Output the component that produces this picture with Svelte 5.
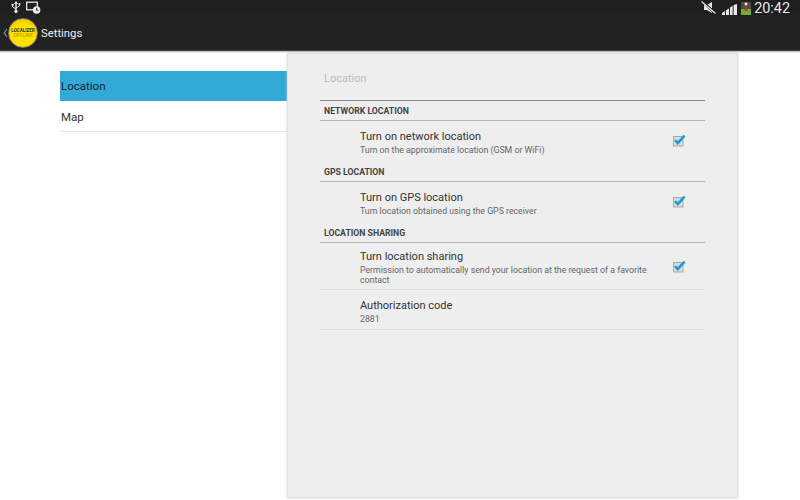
<script>
  const groups = [
    {
      title: "NETWORK LOCATION",
      items: [{ name: "Turn on network location", desc: "Turn on the approximate location (GSM or WiFi)", on: true }]
    },
    {
      title: "GPS LOCATION",
      items: [{ name: "Turn on GPS location", desc: "Turn location obtained using the GPS receiver", on: true }]
    },
    {
      title: "LOCATION SHARING",
      items: [
        { name: "Turn location sharing", desc: "Permission to automatically send your location at the request of a favorite contact", on: true },
        { name: "Authorization code", desc: "2881", on: false }
      ]
    }
  ];
</script>

<div class="screen">
  <div class="status">
    <svg class="usb" width="10" height="13" viewBox="0 0 10 13">
      <path d="M5 0 L7 3 H5.7 V9 A1.6 1.6 0 1 1 4.3 9 V3 H3 Z" fill="#e8e8e8" />
      <path d="M5 8 L1.6 6 V4 M5 7 L8.4 5 V3.6" fill="none" stroke="#e8e8e8" stroke-width="1" />
      <rect x="0.6" y="2.8" width="2" height="2" fill="#e8e8e8" />
      <circle cx="8.4" cy="3" r="1.1" fill="#e8e8e8" />
    </svg>
    <svg class="screenclock" width="15" height="13" viewBox="0 0 15 13">
      <rect x="0.7" y="1.2" width="10.6" height="7.6" fill="none" stroke="#e8e8e8" stroke-width="1.3" />
      <circle cx="10.6" cy="9" r="3.8" fill="#e8e8e8" />
      <path d="M10.6 6.8 V9.2 H12.4" fill="none" stroke="#222" stroke-width="0.9" />
    </svg>
    <span class="spacer"></span>
    <svg class="mute" width="15" height="13" viewBox="0 0 15 13">
      <path d="M3 4 H6 L11 1 V12 L6 9 H3 Z" fill="#e8e8e8" />
      <path d="M0.5 -0.5 L15 13" stroke="#1f1f1f" stroke-width="2.6" />
      <path d="M0.5 0.5 L14.5 12.5" stroke="#e8e8e8" stroke-width="1.2" />
    </svg>
    <svg class="signal" width="15" height="11" viewBox="0 0 15 11">
      <path d="M0 11 V9 L3 7 V11 Z M4 11 V6.2 L7 4.4 V11 Z M8 11 V3.6 L10.6 1.8 V11 Z M11.6 11 V1 L15 0 V11 Z" fill="#e8e8e8" />
    </svg>
    <svg class="app" width="10" height="13" viewBox="0 0 10 13">
      <rect x="0" y="0" width="10" height="7" fill="#4a4a4a" />
      <rect x="0" y="7" width="10" height="6" fill="#6fae2e" />
      <path d="M3 2 H7 L5.6 5.5 L7 9 H3.4 L4.6 5.5 Z" fill="#c9302c" />
      <circle cx="5" cy="2" r="1.4" fill="#e6e6e6" />
    </svg>
    <span class="clock">20:42</span>
  </div>

  <div class="actionbar">
    <svg class="caret" width="5" height="10" viewBox="0 0 5 10">
      <path d="M4 1 L1.2 5 L4 9" fill="none" stroke="#8a8a8a" stroke-width="1.2" />
    </svg>
    <div class="logo">
      <span class="l1">LOCALIZER</span>
      <span class="l2">OFFLINE</span>
    </div>
    <span class="title">Settings</span>
  </div>

  <div class="body">
    <nav class="side">
      <div class="hd active">Location</div>
      <div class="hd">Map</div>
    </nav>
    <main class="panel">
      <div class="crumb">Location</div>
      <div class="rule-top"></div>
      {#each groups as g}
        <div class="group">{g.title}</div>
        {#each g.items as it}
          <div class="pref">
            <div class="txt">
              <div class="name">{it.name}</div>
              <div class="desc">{it.desc}</div>
            </div>
            {#if it.on}
              <svg class="check" width="14" height="13" viewBox="0 0 14 13">
                <rect x="1.5" y="2.5" width="9.5" height="9.5" fill="#dcdcdc" stroke="#a8a8a8" stroke-width="1" />
                <path d="M3 6.2 L5.8 9 L12.6 1.6" fill="none" stroke="#1d9bd6" stroke-width="2.6" />
              </svg>
            {/if}
          </div>
        {/each}
      {/each}
    </main>
  </div>
</div>

<style>
  :global(body) {
    margin: 0;
    background: #fff;
  }
  .screen {
    width: 800px;
    height: 500px;
    display: flex;
    flex-direction: column;
    overflow: hidden;
    font-family: Roboto, "Liberation Sans", sans-serif;
  }
  .status {
    height: 15px;
    background: #1f1f1f;
    display: flex;
    align-items: center;
    padding-left: 11px;
    padding-right: 10px;
    color: #e8e8e8;
  }
  .screenclock {
    margin-left: 5px;
  }
  .spacer {
    flex: 1;
  }
  .signal {
    margin-left: 6px;
    margin-top: 3px;
  }
  .app {
    margin-left: 4px;
    margin-top: 1px;
  }
  .clock {
    font-size: 14.4px;
    margin-left: 3px;
    line-height: 17px;
    height: 15px;
  }
  .actionbar {
    height: 35px;
    background: #222;
    border-bottom: 1px solid #444;
    box-shadow: 0 1px 1px #bbb;
    display: flex;
    align-items: center;
    padding-left: 3px;
    flex: none;
    box-sizing: content-box;
  }
  .logo {
    width: 30px;
    height: 30px;
    box-sizing: border-box;
    border-radius: 50%;
    background: radial-gradient(circle at 50% 60%, #ffe000 50%, #eeb400);
    border: 1px solid #777;
    display: flex;
    flex-direction: column;
    align-items: center;
    justify-content: center;
    line-height: 5px;
    margin-top: 1px;
  }
  .l1 {
    font-size: 4.5px;
    font-weight: 700;
    color: #333;
  }
  .l2 {
    font-size: 5px;
    font-weight: 700;
    color: #c9a900;
  }
  .title {
    color: #eee;
    font-size: 11.3px;
    margin-left: 3px;
    margin-top: 1px;
  }
  .body {
    flex: 1;
    display: flex;
    padding-left: 60px;
    min-height: 0;
  }
  .side {
    width: 227px;
    padding-top: 20px;
    flex: none;
  }
  .hd {
    height: 30px;
    line-height: 32px;
    font-size: 11.5px;
    color: #333;
    padding-left: 1px;
    border-bottom: 1px solid #e4e4e4;
  }
  .hd.active {
    background: #33aad6;
    border-bottom: none;
    line-height: 31px;
    color: #123;
  }
  .panel {
    width: 451px;
    margin-top: 2px;
    height: 445px;
    background: #eee;
    border: 1px solid #e2e2e2;
    box-shadow: 0 0 2px #ccc;
    padding: 0 32px;
    box-sizing: border-box;
  }
  .crumb {
    height: 46px;
    line-height: 50px;
    padding-left: 4px;
    font-size: 11px;
    color: #bbb;
  }
  .rule-top {
    height: 1px;
    background: #888;
  }
  .group {
    height: 19px;
    line-height: 21px;
    padding-left: 4px;
    font-size: 8.7px;
    font-weight: 700;
    color: #444;
    border-bottom: 1px solid #b5b5b5;
  }
  .pref {
    display: flex;
    align-items: center;
    min-height: 41px;
    padding: 6px 0 4px 40px;
    border-bottom: 1px solid #e0e0e0;
    box-sizing: border-box;
  }
  .pref:has(+ .group) {
    border-bottom: none;
    padding: 5px 0 5px 40px;
  }
  .pref:last-child {
    min-height: 40px;
  }
  .txt {
    flex: 1;
    min-width: 0;
  }
  .name {
    font-size: 11px;
    line-height: 15px;
    color: #333;
  }
  .desc {
    font-size: 8.75px;
    line-height: 10px;
    margin-top: 1px;
    color: #666;
    padding-right: 20px;
  }
  .check {
    margin-right: 19px;
    margin-bottom: 2px;
    flex: none;
  }
</style>
